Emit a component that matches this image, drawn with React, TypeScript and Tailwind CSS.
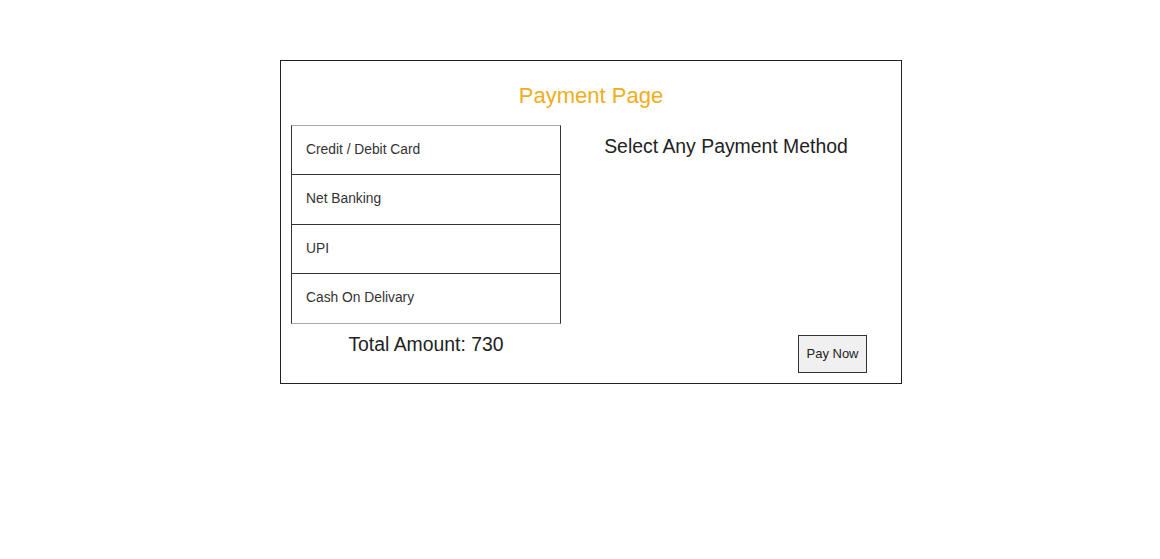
const methods = [
  { label: 'Credit / Debit Card', h: 'h-[48px]' },
  { label: 'Net Banking', h: 'h-[50px]' },
  { label: 'UPI', h: 'h-[49px]' },
  { label: 'Cash On Delivary', h: 'h-[50px]' },
];

export default function App() {
  return (
    <main className="min-h-[559px] bg-white pt-[60px] font-['Liberation_Sans',Arial,sans-serif]">
      <section className="ml-[280px] flex h-[324px] w-[622px] flex-col border border-[#222] px-[10px] pb-[10px]">
        <h1 className="pt-[22px] text-center text-[22px] leading-[26px] text-[#f0ad1e]">Payment Page</h1>

        <div className="mt-[16px] flex flex-1">
          {/* left: methods list + total */}
          <div className="flex w-[270px] flex-col">
            <ul className="border-x border-t border-b border-x-[#333] border-t-[#aaa] border-b-[#aaa]">
              {methods.map((m, i) => (
                <li
                  key={m.label}
                  className={`flex items-center px-[14px] text-[13.8px] text-[#333] ${m.h} ${
                    i > 0 ? 'border-t border-[#333]' : ''
                  }`}
                >
                  {m.label}
                </li>
              ))}
            </ul>
            <p className="mt-[8px] text-center text-[19.4px] leading-[24px] text-[#222]">Total Amount: 730</p>
          </div>

          {/* right: prompt + pay button */}
          <div className="flex flex-1 flex-col">
            <h2 className="mt-[9px] text-center text-[19.4px] leading-[24px] text-[#222]">Select Any Payment Method</h2>
            <button
              type="button"
              className="mt-auto mr-[24px] h-[38px] w-[69px] self-end border-[1.5px] border-[#333] bg-[#f0f0f0] text-[13px] text-[#222]"
            >
              Pay Now
            </button>
          </div>
        </div>
      </section>
    </main>
  );
}
